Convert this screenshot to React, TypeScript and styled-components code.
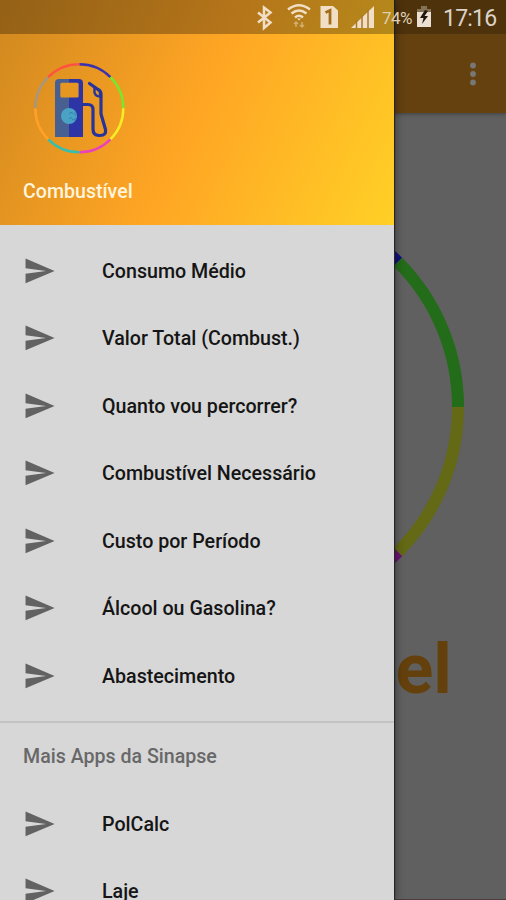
import React from 'react';
import styled, { createGlobalStyle } from 'styled-components';

const GlobalStyle = createGlobalStyle`
  * { box-sizing: border-box; }
  body { margin: 0; font-family: Roboto, sans-serif; overflow: hidden; }
`;

const Screen = styled.div`
  position: relative;
  width: 506px;
  height: 900px;
  overflow: hidden;
  background: #606060;
`;

const Page = styled.div`
  display: flex;
  flex-direction: column;
  height: 100%;
  border-bottom: 1px solid #4b3a3e;
`;

const AppBar = styled.header`
  display: flex;
  justify-content: flex-end;
  align-items: center;
  height: 113px;
  padding: 34px 25px 0 0;
  background: #64410f;
  box-shadow: 0 1px 4px rgba(0, 0, 0, 0.35);
  flex: none;
`;

const Content = styled.main`
  display: flex;
  flex-direction: column;
  align-items: center;
  padding-top: 82px;
`;

const PageTitle = styled.h1`
  margin: 9px 0 0;
  padding-left: 3px;
  font-size: 70px;
  line-height: 82px;
  font-weight: 700;
  color: #64410c;
`;

const Drawer = styled.aside`
  position: absolute;
  inset: 0 auto 0 0;
  width: 394px;
  display: flex;
  flex-direction: column;
  background: #d7d7d7;
  box-shadow: 1px 0 1px #262626, 2px 0 8px rgba(0, 0, 0, 0.35);
`;

const DrawerHeader = styled.div`
  display: flex;
  flex-direction: column;
  height: 225px;
  padding: 62px 0 0 23px;
  background: linear-gradient(115deg, #d0881f 0%, #ffa524 49%, #ffd026 100%);
  flex: none;
`;

const HeaderTitle = styled.div`
  margin-top: 24px;
  font-size: 19.6px;
  line-height: 27px;
  font-weight: 500;
  color: #fff4dc;
`;

const Menu = styled.nav<{ $top: number }>`
  display: flex;
  flex-direction: column;
  flex: none;
  padding-top: ${(p) => p.$top}px;
`;

const Item = styled.a`
  display: flex;
  align-items: center;
  gap: 46px;
  height: 67.5px;
  padding-left: 22px;
  font-size: 19.65px;
  font-weight: 500;
  color: #151515;
  flex: none;
`;

const ItemLabel = styled.span`
  padding-top: 1px;
`;

const Divider = styled.div`
  height: 2px;
  margin-top: 11px;
  background: #c3c3c3;
  flex: none;
`;

const SubHeader = styled.div`
  display: flex;
  align-items: center;
  height: 67.5px;
  padding: 1px 0 0 23px;
  font-size: 19.6px;
  font-weight: 500;
  color: #686868;
  flex: none;
`;

const StatusBar = styled.div`
  position: absolute;
  inset: 0 0 auto 0;
  height: 34px;
  display: flex;
  align-items: center;
  padding-left: 256px;
  background: linear-gradient(90deg, rgba(0, 0, 0, 0.29) 394px, rgba(0, 0, 0, 0.23) 394px);
  color: #f0dfc5;
`;

const Battery = styled.span`
  width: 34px;
  margin-left: 7px;
  padding-top: 1px;
  font-size: 17px;
  letter-spacing: -0.5px;
  color: #dfcfb3;
  white-space: nowrap;
`;

const Clock = styled.span`
  margin-left: 11px;
  font-size: 23px;
  padding-top: 2px;
  letter-spacing: -0.8px;
  color: #dbd3c8;
`;

const polar = (cx: number, cy: number, r: number, deg: number) => {
  const a = (deg * Math.PI) / 180;
  return `${(cx + r * Math.sin(a)).toFixed(2)} ${(cy - r * Math.cos(a)).toFixed(2)}`;
};

function Ring({ c, r, width, colors }: { c: number; r: number; width: number; colors: string[] }) {
  return (
    <g fill="none" strokeWidth={width}>
      {colors.map((color, i) => (
        <path
          key={i}
          stroke={color}
          d={`M${polar(c, c, r, i * 45)} A${r} ${r} 0 0 1 ${polar(c, c, r, i * 45 + 45)}`}
        />
      ))}
    </g>
  );
}

const LOGO_COLORS = ['#3d32ae', '#78e72d', '#f4ed26', '#e943bb', '#36bfae', '#ffa126', '#a79780', '#ff5340'];
const DIM_COLORS = ['#12127a', '#236c19', '#636914', '#6b1373', '#145f60', '#64410c', '#4b4b4b', '#701d18'];

function Logo() {
  return (
    <svg width="112" height="92" viewBox="0 0 112 92">
      <g transform="translate(10 0)">
        <Ring c={46.3} r={44} width={2.5} colors={LOGO_COLORS} />
      </g>
      <path d="M32 75V21q0-4 4-4h10v58z" fill="#485f91" />
      <path d="M46 75V17h10q4 0 4 4v54z" fill="#2d35a6" />
      <rect x="37.300" y="20.800" width="18.300" height="14.800" rx="1.500" fill="#e69722" />
      <g fill="none" stroke="#26349b" strokeWidth="3.2" strokeLinejoin="round" strokeLinecap="round">
        <path d="M60 42.500h5q5 0 5 5V67q0 6.500 6 6.500h1q6.500 0 5.500-6L78 52V32q0-3-3-4.500L66.500 21.500" />
        <path d="M71.500 25.500v5q1 4 5.500 4V30" strokeWidth="2.400" />
      </g>
      <circle cx="46" cy="54" r="8" fill="#4aa3c4" />
      <path d="M46 52q2-3 4-.5M52 50.500v3M46 57q2-3 3.500 0t3-1" fill="none" stroke="#2d7eb4" strokeWidth="1" />
    </svg>
  );
}

function SendIcon() {
  return (
    <svg width="34" height="34" viewBox="0 0 24 24" fill="#626262">
      <path d="M2.500 20.700 23 12 2.500 3.200V10l14.500 2-14.500 2z" />
    </svg>
  );
}

function StatusIcons() {
  return (
    <svg width="119" height="34" viewBox="256 0 119 34">
      <path d="m258 12.500 12.500 10-6.500 5.500V7.500l6.500 5-12.500 10" fill="none" stroke="currentColor" strokeWidth="2.500" />
      <g fill="none" stroke="currentColor" strokeWidth="2.400">
        <path d="M288 9.500q11-8.500 22 0" />
        <path d="M291.500 13.500q7.500-6 15 0" />
        <path d="M295 17.500q4-3.500 8 0" />
      </g>
      <path d="M297 18.500h4l-2 2z" fill="currentColor" />
      <path d="M296 27v-5m-2 2 2-2 2 2M302 22v5m-2-2 2 2 2-2" fill="none" stroke="currentColor" strokeWidth="1.500" opacity=".5" />
      <path d="M320.500 6h12.500l5 4.500V28h-17.500z" fill="currentColor" />
      <path d="M325.500 12.500 330 10.500v14" fill="none" stroke="#a36d1c" strokeWidth="2.800" />
      <path d="M351 28 374 6v22z" fill="currentColor" />
      <path d="M356.500 20v8M362 15v13M368 10v18" stroke="#a9752c" strokeWidth="1.500" />
    </svg>
  );
}

function BatteryIcon() {
  return (
    <svg width="16" height="34" viewBox="0 0 16 34">
      <path d="M5 6h6v3h4v4H1V9h4z" fill="#857255" />
      <path d="M1 12h14v15H1z" fill="#ebe0d2" />
      <path d="m9 10-5 8h3.500L6 24l6-8H8.500L12 11z" fill="#20180d" />
    </svg>
  );
}

function MoreIcon() {
  return (
    <svg width="16" height="28" viewBox="0 0 16 28" fill="#777775">
      <circle cx="8" cy="5.500" r="2.900" />
      <circle cx="8" cy="14" r="2.900" />
      <circle cx="8" cy="22.500" r="2.900" />
    </svg>
  );
}

const TOOLS = [
  'Consumo Médio',
  'Valor Total (Combust.)',
  'Quanto vou percorrer?',
  'Combustível Necessário',
  'Custo por Período',
  'Álcool ou Gasolina?',
  'Abastecimento',
];
const APPS = ['PolCalc', 'Laje'];

function MenuList({ items, top = 0 }: { items: string[]; top?: number }) {
  return (
    <Menu $top={top}>
      {items.map((label) => (
        <Item key={label}>
          <SendIcon />
          <ItemLabel>{label}</ItemLabel>
        </Item>
      ))}
    </Menu>
  );
}

export default function App() {
  return (
    <Screen>
      <GlobalStyle />
      <Page>
        <AppBar>
          <MoreIcon />
        </AppBar>
        <Content>
          <svg width="424" height="424" viewBox="0 0 424 424">
            <Ring c={212} r={205} width={12} colors={DIM_COLORS} />
          </svg>
          <PageTitle>Combustível</PageTitle>
        </Content>
      </Page>
      <Drawer>
        <DrawerHeader>
          <Logo />
          <HeaderTitle>Combustível</HeaderTitle>
        </DrawerHeader>
        <MenuList items={TOOLS} top={12} />
        <Divider />
        <SubHeader>Mais Apps da Sinapse</SubHeader>
        <MenuList items={APPS} />
      </Drawer>
      <StatusBar>
        <StatusIcons />
        <Battery>74%</Battery>
        <BatteryIcon />
        <Clock>17:16</Clock>
      </StatusBar>
    </Screen>
  );
}
